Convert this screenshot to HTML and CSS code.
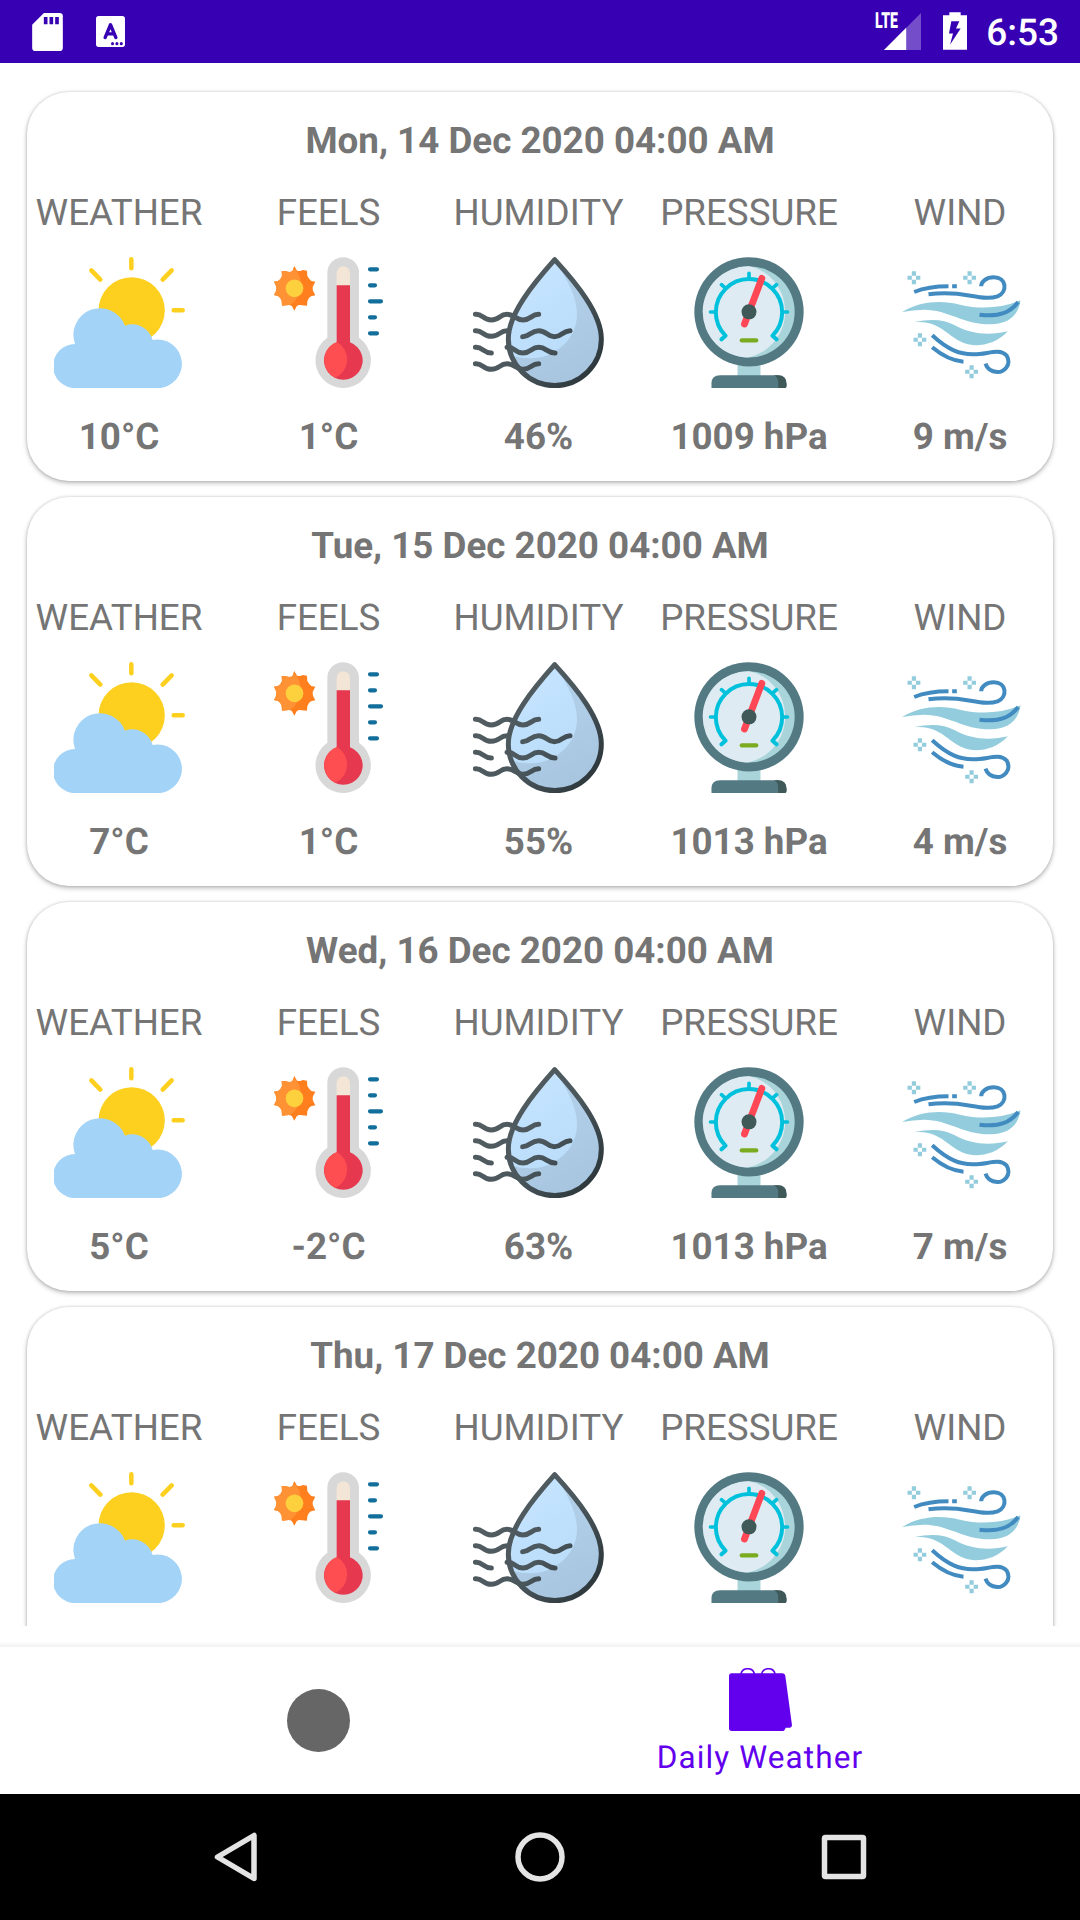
FILE: index.html
```html
<!DOCTYPE html>
<html lang="en">
<head>
<meta charset="utf-8">
<title>Daily Weather</title>
<link rel="stylesheet" href="styles.css">
</head>
<body>
<svg class="sprite" aria-hidden="true">
  <defs>
    <linearGradient id="line" gradientUnits="userSpaceOnUse" x1="130" y1="150" x2="450" y2="400">
      <stop offset="0" stop-color="#535d62"/><stop offset=".5" stop-color="#4a575c"/><stop offset="1" stop-color="#2a3439"/>
    </linearGradient>
    <linearGradient id="water" gradientUnits="userSpaceOnUse" x1="200" y1="100" x2="400" y2="400">
      <stop offset="0" stop-color="#c5e4ff"/><stop offset="1" stop-color="#b7dbf9"/>
    </linearGradient>
    <linearGradient id="shade" gradientUnits="userSpaceOnUse" x1="320" y1="200" x2="420" y2="400">
      <stop offset="0" stop-color="#b0cee8"/><stop offset="1" stop-color="#a7c5df"/>
    </linearGradient>
    <clipPath id="sunClip"><path id="burst" d="M133 77l8 14q10 3 17-2l13 2 1 16q5 9 12 15l12 2-7 14q-3 7 0 13l7 14-13 3q-9 5-11 15l-1 13-15-1q-10-3-16 3l-7 13-7-13q-7-6-16-3l-14 1-1-15q-3-9-11-14l-12-3 6-12q3-8 0-15l-6-13 12-2q9-5 12-15l-1-15 14 1q9 4 18 0z"/></clipPath>
  </defs>
  <symbol id="weather" viewBox="100 50 393 393">
    <circle cx="333" cy="210" r="99.500" fill="#fdd020"/>
    <path d="M332 57V84M212 90L239 118M453 90L426 118M459 210H486" fill="none" stroke="#fdd020" stroke-width="13.500" stroke-linecap="round"/>
    <path d="M164 443.500A66 66 0 0 1 163 311A79 79 0 0 1 313 256A63 63 0 0 1 396 299A73 73 0 1 1 411 443.500Z" fill="#a4d3f8"/>
  </symbol>
  <symbol id="feels" viewBox="39 50 393 393">
    <use href="#burst" fill="#ff7f1f"/>
    <g clip-path="url(#sunClip)"><path d="M60 70H119Q166 110 146 158Q141 180 119 195L100 215H60Z" fill="#ff9234"/></g>
    <circle cx="133.500" cy="144" r="26.500" fill="#fdd03d"/>
    <path d="M232 98A47.500 47.500 0 0 1 327 98V292A83 83 0 1 1 232 292Z" fill="#d8d8d8"/>
    <path d="M260 136V98A20 20 0 0 1 300 98V136Z" fill="#f3e6d6"/>
    <path d="M260 135H300V306A58 58 0 1 1 260 306Z" fill="#e63950"/>
    <path d="M261 305A58 58 0 0 0 256 412A60 60 0 0 0 261 305Z" fill="#ff4e51"/>
    <path d="M360 87H381M360 135H375M360 183H393M360 231H375M360 279H381" stroke="#126f9c" stroke-width="12.500" stroke-linecap="round"/>
  </symbol>
  <symbol id="humidity" viewBox="69 50 393 393">
    <path d="M314 58C250 130 174 220 174 296A140 140 0 0 0 454 296C454 220 380 130 314 58Z" fill="url(#water)"/>
    <path d="M319 68C355 120 381 175 381 222C381 300 310 356 240 354Q205 354 186 344C205 405 260 435 314 435A140 140 0 0 0 454 296C454 225 380 130 319 68Z" fill="url(#shade)"/>
    <g fill="none" stroke="url(#line)" stroke-width="15" stroke-linecap="round" stroke-linejoin="round">
      <path d="M314 58C250 130 175 220 175 296A139.500 139.500 0 0 0 454 296C454 220 380 130 314 58Z"/>
      <path d="M76 222C98 220 98 239 124 239S148 222 171 222S196 239 219 239S244 222 266 222"/>
      <path d="M76 271C98 269 98 288 124 288S148 271 171 271"/>
      <path d="M218 289C241 289 241 271 266 271S290 289 313 289S337 271 360 271"/>
      <path d="M76 321C98 319 100 338 124 338"/>
      <path d="M171 321C194 319 194 338 219 338S243 321 266 321S291 338 315 338"/>
      <path d="M76 370C98 368 98 387 124 387S148 370 171 370S196 387 219 387S244 370 266 370"/>
    </g>
  </symbol>
  <symbol id="pressure" viewBox="70.5 50 393 393">
    <path d="M231 365H300V415H231Z" fill="#a9d5da"/>
    <path d="M153 443.500V429Q153 405 179 405H352Q378 405 378 431V436Q378 443.500 371 443.500Z" fill="#537983"/>
    <path d="M340 405H352Q378 405 378 431V436Q378 443.500 371 443.500H353V426Q353 410 340 405Z" fill="#3f5959"/>
    <circle cx="265.500" cy="214.500" r="164" fill="#537983"/>
    <circle cx="265.500" cy="214.500" r="137" fill="#a9d5da"/>
    <path d="M265 77.500A137 137 0 0 0 262 351.500C315 342 374 290 374 214C374 145 325 88 265 77.500Z" fill="#deebf2"/>
    <g fill="none" stroke="#00c1dc" stroke-linecap="round" stroke-linejoin="round">
      <path d="M183 297L195 286A99.500 99.500 0 1 1 336 286L348 297" stroke-width="12"/>
      <path d="M265.500 111V99M193 142L183 133M338 142L348 133M162 215H150M369 215H381" stroke-width="11"/>
    </g>
    <path d="M304 114L252 251" stroke="#ff4756" stroke-width="20.500" stroke-linecap="round"/>
    <circle cx="265.500" cy="214.500" r="22.500" fill="#3f5959"/>
    <path d="M244 300H287" stroke="#7bac20" stroke-width="13" stroke-linecap="round"/>
  </symbol>
  <symbol id="sparkle" viewBox="0 0 39 39" overflow="visible">
    <path d="M13 0H25.500V13H13ZM0 13H13V25.500H0ZM25.500 13H38.500V25.500H25.500ZM13 25.500H25.500V38.500H13Z" fill="#93cddd"/>
  </symbol>
  <symbol id="wind" viewBox="43.5 50 393 393">
    <use href="#sparkle" x="81" y="93" width="39" height="39"/>
    <use href="#sparkle" x="248" y="93" width="39" height="39"/>
    <use href="#sparkle" x="99" y="279" width="39" height="39"/>
    <use href="#sparkle" x="254" y="375" width="39" height="39"/>
    <path d="M65 215C120 180 188 180 238 193C300 208 365 204 420 180C414 225 382 252 330 252C245 252 205 208 130 208Q98 209 65 215Z" fill="#93cddd"/>
    <path d="M100 246C150 235 190 237 223 255C270 281 325 287 382 273C354 302 322 315 284 315C208 312 193 237 100 246Z" fill="#93cddd"/>
    <g fill="none" stroke="#428bc1" stroke-width="12">
      <path d="M101 155C136 141 171 138 204 138M215 138H229"/>
      <path d="M144 162C197 155 230 159 270 166C310 173 330 175 351 168C383 154 378 111 340 111C317 111 302 124 302 138"/>
      <path d="M297 223C357 231 390 216 413 185"/>
      <path d="M155 285C205 331 240 343 280 342C322 342 355 323 378 345C396 376 367 396 350 395C332 394 320 386 315 370"/>
      <path d="M155 321C185 346 215 362 249 364"/>
    </g>
  </symbol>
</svg>

<header class="status-bar">
  <div class="status-group notifications">
    <svg class="sd-icon" viewBox="0 0 92 114" width="31" height="38"><path d="M35 0H82Q92 0 92 10V104Q92 114 82 114H10Q0 114 0 104V35Z" fill="#fff"/><path d="M35 12H46V34H35ZM52 12H63V34H52ZM69 12H80V34H69Z" fill="#3700b3"/></svg>
    <svg class="a-icon" viewBox="0 0 86 92" width="29" height="31"><rect width="86" height="92" rx="8" fill="#fff"/><path d="M27 64L43 26L59 64M33 53H53" fill="none" stroke="#3700b3" stroke-width="10" stroke-linecap="round" stroke-linejoin="round"/><g fill="#3700b3"><circle cx="49" cy="82" r="4.500"/><circle cx="62" cy="82" r="4.500"/><circle cx="75" cy="82" r="4.500"/></g></svg>
  </div>
  <div class="status-group system">
    <div class="signal"><span class="lte">LTE</span><svg viewBox="0 0 110 110" width="37" height="37"><path d="M0 110L110 0V110Z" fill="#fff" opacity=".3"/><path d="M0 110L66 44V110Z" fill="#fff"/></svg></div>
    <svg class="battery" viewBox="0 0 72 113" width="24" height="38"><path d="M19 0H53V9H72V113H0V9H19Z" fill="#fff"/><path d="M25 27H49L39 49H53L21 98L30 64H18Z" fill="#3700b3"/></svg>
    <time class="clock">6:53</time>
  </div>
</header>

<main class="forecast" id="forecast"></main>

<nav class="tabs">
  <a class="tab"><span class="dot"></span></a>
  <a class="tab active">
    <svg viewBox="0 0 189 189" width="63" height="63"><path d="M8 16H161Q168 16 169 24L189 172Q189 178 183 179H170Q167 189 160 189H8Q0 189 0 181V24Q0 16 8 16Z" fill="#6200ee"/><path d="M36 18C40-3 72-3 76 18M98 18C102-3 134-3 138 18" fill="none" stroke="#6200ee" stroke-width="5"/></svg>
    <span class="tab-label">Daily Weather</span>
  </a>
</nav>

<footer class="system-nav">
  <svg viewBox="0 0 50 50" width="50" height="50"><path d="M43 3.500V46.500L6.500 25Z"/></svg>
  <svg viewBox="0 0 50 50" width="50" height="50"><circle cx="25" cy="25" r="22"/></svg>
  <svg viewBox="0 0 50 50" width="50" height="50"><rect x="5.500" y="5.500" width="39" height="39" rx="1"/></svg>
</footer>
<script src="app.js"></script>
</body>
</html>
```
FILE: styles.css
```css
* { box-sizing: border-box; }

body {
  margin: 0;
  width: 1080px;
  height: 1920px;
  overflow: hidden;
  display: flex;
  flex-direction: column;
  background: #fff;
  color: #757575;
  font-family: Roboto, sans-serif;
  text-rendering: geometricPrecision;
}

svg { display: block; flex: none; }
.sprite { position: absolute; width: 0; height: 0; }

.status-bar {
  flex: none;
  height: 63px;
  padding: 0 21px 0 32px;
  display: flex;
  justify-content: space-between;
  background: #3700b3;
  color: #fff;
}
.status-group { display: flex; align-items: flex-start; }
.notifications { gap: 33px; padding-top: 12.500px; }
.a-icon { margin-top: 3.500px; }
.battery { margin: 12px 19px 0 22px; }
.signal { display: flex; padding-top: 13px; }
.lte {
  width: 9px;
  font-size: 22px;
  line-height: 17px;
  font-weight: 900;
  transform: scaleX(.64);
  transform-origin: left;
}
.clock { font-size: 37px; line-height: 44px; padding-top: 12px; font-weight: 500; }

.forecast {
  flex: none;
  height: 1563px;
  padding: 29px 27px 0;
  overflow: hidden;
  display: flex;
  flex-direction: column;
  gap: 16px;
}
.card {
  flex: none;
  height: 389px;
  border-radius: 42px;
  padding-top: 27px;
  background: #fff;
  box-shadow: 0 2px 5px rgba(0, 0, 0, .27), 0 0 3px rgba(0, 0, 0, .16);
}
.date {
  margin: 0 0 28px;
  font-size: 36.750px;
  line-height: 44px;
  font-weight: 700;
  text-align: center;
}
.metrics { display: grid; grid-template-columns: 184px 235px 185px 236px 186px; }
.metric { display: flex; flex-direction: column; align-items: center; white-space: nowrap; }
.label { font-size: 36.750px; line-height: 44px; }
.icon { width: 131px; height: 131px; margin: 22px 0 27px; }
.value { font-size: 36.750px; line-height: 44px; font-weight: 700; }

.tabs {
  flex: none;
  height: 168px;
  padding: 21px 2px 0 0;
  display: flex;
  justify-content: center;
  background: linear-gradient(#fff 15px, #f2f2f2 21px, #fff 21px);
}
.tab { width: 442px; display: flex; flex-direction: column; align-items: center; justify-content: center; }
.active { color: #6200ee; justify-content: flex-start; padding-top: 21px; }
.dot { width: 63px; height: 63px; border-radius: 50%; background: #666; }
.tab-label { margin-top: 8px; font-size: 31.500px; line-height: 38px; letter-spacing: 1.100px; }

.system-nav {
  flex: none;
  height: 126px;
  display: flex;
  justify-content: center;
  align-items: center;
  gap: 254px;
  background: #000;
}
.system-nav svg { fill: none; stroke: #e4e4e4; stroke-width: 5.500; stroke-linejoin: round; }
```
FILE: app.js
```js
const labels = ["WEATHER", "FEELS", "HUMIDITY", "PRESSURE", "WIND"];
const icons = ["weather", "feels", "humidity", "pressure", "wind"];
const days = [
  ["Mon, 14 Dec 2020 04:00 AM", "10°C", "1°C", "46%", "1009 hPa", "9 m/s"],
  ["Tue, 15 Dec 2020 04:00 AM", "7°C", "1°C", "55%", "1013 hPa", "4 m/s"],
  ["Wed, 16 Dec 2020 04:00 AM", "5°C", "-2°C", "63%", "1013 hPa", "7 m/s"],
  ["Thu, 17 Dec 2020 04:00 AM", "", "", "", "", ""]
];

document.getElementById("forecast").innerHTML = days.map(([date, ...values]) => `
  <article class="card">
    <h2 class="date">${date}</h2>
    <div class="metrics">${values.map((value, i) => `
      <div class="metric">
        <span class="label">${labels[i]}</span>
        <svg class="icon"><use href="#${icons[i]}"/></svg>
        <span class="value">${value}</span>
      </div>`).join("")}
    </div>
  </article>`).join("");
```
